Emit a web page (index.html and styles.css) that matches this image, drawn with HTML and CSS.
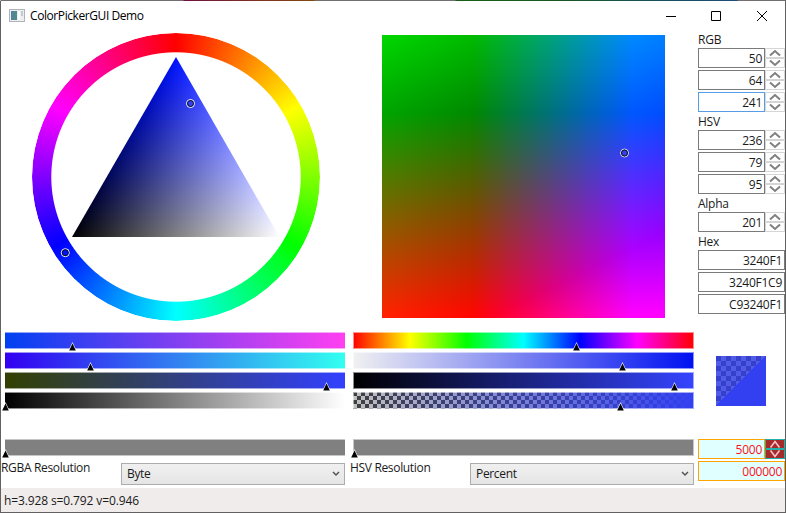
FILE: index.html
```html
<!DOCTYPE html>
<html lang="en">
<head>
<meta charset="utf-8">
<title>ColorPickerGUI Demo</title>
<link rel="stylesheet" href="styles.css">
</head>
<body>
<div class="window">
  <header class="titlebar">
    <svg class="app-icon" width="16" height="14" viewBox="0 0 16 14">
      <rect x=".5" y=".5" width="15" height="12" fill="#eceef1" stroke="#b0b3b7"/>
      <rect x="2" y="2" width="6" height="9" fill="#4d8f88"/>
      <rect x="2" y="2" width="3" height="9" fill="#5484a0"/>
      <rect x="9" y="2" width="2" height="9" fill="#fff"/>
      <rect x="12" y="2" width="2" height="5" fill="#c0cdd0"/>
    </svg>
    <h1 class="title">ColorPickerGUI Demo</h1>
    <svg class="caption" width="102" height="12" viewBox="0 0 102 12">
      <path d="M0 6.500h10M45.500 1.500h9v9h-9zM91 1l10 10M101 1L91 11" fill="none" stroke="#000"/>
    </svg>
  </header>

  <main class="content">
    <section class="column">
      <div class="stage">
        <div class="wheel">
          <div class="ring"></div>
          <svg class="overlay" width="288" height="288" viewBox="0 0 288 288">
            <defs>
              <linearGradient id="hue" gradientUnits="userSpaceOnUse" x1="0" y1="24" x2="0" y2="204">
                <stop offset="0" stop-color="#0012ff"/><stop offset="1" stop-color="#000"/>
              </linearGradient>
              <linearGradient id="white" gradientUnits="userSpaceOnUse" x1="92" y1="114" x2="247.500" y2="204">
                <stop offset="0" stop-color="#000"/><stop offset="1" stop-color="#fff"/>
              </linearGradient>
              <clipPath id="tri"><path d="M144 24L247.500 204H40z"/></clipPath>
            </defs>
            <g clip-path="url(#tri)" class="isolate">
              <rect x="40" y="24" width="208" height="180" fill="url(#hue)"/>
              <rect class="add" x="40" y="24" width="208" height="180" fill="url(#white)"/>
            </g>
            <g fill="none">
              <g transform="translate(158.500 70.500)"><circle r="4" stroke="#fff"/><circle r="3" stroke="#111"/></g>
              <g transform="translate(33.300 219.700)"><circle r="4" stroke="#fff"/><circle r="3" stroke="#111"/></g>
            </g>
          </svg>
        </div>
      </div>
      <div class="sliders">
        <div class="slider red"><svg class="thumb" style="left:67px"><use href="#thumb"/></svg></div>
        <div class="slider green"><svg class="thumb" style="left:85px"><use href="#thumb"/></svg></div>
        <div class="slider blue"><svg class="thumb" style="left:321px"><use href="#thumb"/></svg></div>
        <div class="slider gray"><svg class="thumb" style="left:0px"><use href="#thumb"/></svg></div>
      </div>
      <div class="slider plain"><svg class="thumb" style="left:0px"><use href="#thumb"/></svg></div>
      <div class="resolution">
        <span class="label">RGBA Resolution</span>
        <div class="combo"><span>Byte</span><svg width="8" height="6" viewBox="0 0 8 6"><path d="M1 1l3 3 3-3" fill="none" stroke="#555" stroke-width="1.500"/></svg></div>
      </div>
    </section>

    <section class="column second">
      <div class="stage">
        <svg class="plane" width="283" height="283" viewBox="0 0 283 283">
          <defs>
            <linearGradient id="pr" x1="0" y1=".276" x2="0" y2=".989"><stop offset="0" stop-color="#000"/><stop offset="1" stop-color="#f00"/></linearGradient>
            <linearGradient id="pg" x1="0" y1="0" x2=".462" y2=".958"><stop offset="0" stop-color="#00d700"/><stop offset="1" stop-color="#000"/></linearGradient>
            <linearGradient id="pb" x1=".323" y1="0" x2=".887" y2="0"><stop offset="0" stop-color="#000"/><stop offset="1" stop-color="#00f"/></linearGradient>
          </defs>
          <g class="isolate">
            <rect width="283" height="283" fill="url(#pr)"/>
            <rect class="add" width="283" height="283" fill="url(#pg)"/>
            <rect class="add" width="283" height="283" fill="url(#pb)"/>
          </g>
          <g transform="translate(242.500 118)" fill="none"><circle r="4" stroke="#ddd"/><circle r="3" stroke="#111"/></g>
        </svg>
      </div>
      <div class="sliders">
        <div class="slider hue"><svg class="thumb" style="left:223px"><use href="#thumb"/></svg></div>
        <div class="slider sat"><svg class="thumb" style="left:269px"><use href="#thumb"/></svg></div>
        <div class="slider val"><svg class="thumb" style="left:321px"><use href="#thumb"/></svg></div>
        <div class="slider alpha"><svg class="thumb" style="left:267px"><use href="#thumb"/></svg></div>
      </div>
      <div class="slider plain"><svg class="thumb" style="left:1px"><use href="#thumb"/></svg></div>
      <div class="resolution">
        <span class="label">HSV Resolution</span>
        <div class="combo"><span>Percent</span><svg width="8" height="6" viewBox="0 0 8 6"><path d="M1 1l3 3 3-3" fill="none" stroke="#555" stroke-width="1.500"/></svg></div>
      </div>
    </section>

    <aside class="values">
      <div class="group">
        <span class="label">RGB</span>
        <div class="row"><span class="field">50</span><svg class="spin"><use href="#spin"/></svg></div>
        <div class="row"><span class="field">64</span><svg class="spin"><use href="#spin"/></svg></div>
        <div class="row"><span class="field focus">241</span><svg class="spin"><use href="#spin"/></svg></div>
      </div>
      <div class="group">
        <span class="label">HSV</span>
        <div class="row"><span class="field">236</span><svg class="spin"><use href="#spin"/></svg></div>
        <div class="row"><span class="field">79</span><svg class="spin"><use href="#spin"/></svg></div>
        <div class="row"><span class="field">95</span><svg class="spin"><use href="#spin"/></svg></div>
      </div>
      <div class="group">
        <span class="label">Alpha</span>
        <div class="row"><span class="field">201</span><svg class="spin"><use href="#spin"/></svg></div>
      </div>
      <div class="group">
        <span class="label">Hex</span>
        <div class="row"><span class="field">3240F1</span></div>
        <div class="row"><span class="field">3240F1C9</span></div>
        <div class="row"><span class="field">C93240F1</span></div>
      </div>
      <div class="swatch"></div>
      <div class="group styled">
        <div class="row"><span class="field">5000</span>
          <svg class="spin" viewBox="0 0 20 20"><rect width="20" height="20" fill="#a52a2a"/><path d="M.5.500h19v9H.5zM.5 10.500h19v9H.5z" fill="none" stroke="#20b2aa"/><path d="M5.500 8.500l4.500-6 4.500 6M5.500 11.500l4.500 6 4.500-6" fill="none" stroke="#ffc0cb" stroke-width="1.600"/></svg>
        </div>
        <div class="row"><span class="field">000000</span></div>
      </div>
    </aside>
  </main>

  <footer class="status">h=3.928 s=0.792 v=0.946</footer>
</div>

<svg class="symbols" width="0" height="0">
  <symbol id="thumb" viewBox="0 0 9 10"><path d="M4.500 0L9 9.500H0z" fill="#fff" fill-opacity=".85"/><path d="M4.500 1.500L7.800 8.500H1.200z" fill="#000"/></symbol>
  <symbol id="spin" viewBox="0 0 20 20"><rect width="20" height="20" fill="#fff"/><path d="M.5.500h19v9H.5zM.5 10.500h19v9H.5z" fill="none" stroke="#d5d5d5"/><path d="M5 7.500l5-4.500 5 4.500M5 12.500l5 4.500 5-4.500" fill="none" stroke="#808080" stroke-width="2"/></symbol>
</svg>
</body>
</html>
```
FILE: styles.css
```css
* { box-sizing: border-box; }
body { margin: 0; overflow: hidden; }
.window {
  width: 786px; height: 513px;
  display: flex; flex-direction: column;
  background:
    linear-gradient(90deg, #706e6e 183px, #701040 184px, #803020 260px, #804a10 314px, #706e6e 315px 455px,
      #186018 456px, #185820 560px, #185060 660px, #1c4c78 737px, #706e6e 738px) 0 0 / 100% 1px no-repeat border-box,
    #fff;
  border: 1px solid #626060;
  border-top-color: transparent;
  font: 12px/16px "Open Sans", "Noto Sans", sans-serif;
  letter-spacing: -.25px;
  color: #1a1a1a;
}
.symbols { position: absolute; }
.titlebar { height: 30px; display: flex; align-items: center; padding: 0 17px 0 8px; flex: none; }
.title { margin: 0 auto 0 5px; font-size: 12px; font-weight: 400; letter-spacing: -.42px; color: #000; }
.content { flex: 1; display: grid; grid-template-columns: 348px 349px 1fr; }
.column { display: flex; flex-direction: column; }
.stage { height: 301px; display: flex; flex: none; }
.wheel { position: relative; width: 288px; height: 288px; margin: 2px 0 0 31px; }
.ring {
  width: 288px; height: 288px; border-radius: 50%;
  background: conic-gradient(#f00, #ff0, #0f0, #0ff, #00f, #f0f, #f00);
  mask: radial-gradient(circle, transparent 124.200px, #000 125.200px);
}
.overlay { position: absolute; inset: 0; }
.isolate { isolation: isolate; }
.add { mix-blend-mode: plus-lighter; }
.plane { margin: 4px 0 0 33px; }
.sliders { display: grid; row-gap: 3px; margin-bottom: 30px; }
.slider { position: relative; width: 340px; height: 17px; margin-left: 4px; flex: none; }
.slider::before {
  content: ""; position: absolute; inset: 0;
  border: solid rgba(255,255,255,.55); border-width: 1px 0;
}
.second .slider { width: 341px; }
.second .slider::before { border-width: 1px; }
.thumb { position: absolute; left: 0; top: 10px; width: 9px; height: 10px; margin-left: -4px; }
.red { background: linear-gradient(90deg, #0040f1, #ff40f1); }
.green { background: linear-gradient(90deg, #3200f1, #32fff1); }
.blue { background: linear-gradient(90deg, #324000, #3240ff); }
.gray { background: linear-gradient(90deg, #000, #fff); }
.hue { background: linear-gradient(90deg, #f00, #ff0, #0f0, #0ff, #00f, #f0f, #f00); }
.sat { background: linear-gradient(90deg, #f1f1f1, #0011f1); }
.val { background: linear-gradient(90deg, #000, #3544ff); }
.alpha {
  background: linear-gradient(90deg, rgba(50,64,241,0), #3240f1),
    repeating-conic-gradient(#c0c0c0 0 25%, #404040 0 50%) 0 0 / 8px 8px;
}
.plain { background: #808080; }
.resolution { display: grid; grid-template-columns: 120px 224px; margin-top: 4px; letter-spacing: -.33px; }
.second .resolution { margin-left: 1px; }
.combo {
  height: 22px; margin-top: 3px; padding: 0 4px 0 5px;
  display: flex; align-items: center; justify-content: space-between;
  border: 1px solid #acacac;
  background: linear-gradient(#f0f0f0, #e5e5e5);
}
.values { display: flex; flex-direction: column; margin-top: -1px; }
.group { display: grid; row-gap: 2px; }
.label { height: 16px; }
.values .label { padding-top: 2px; }
.row { display: flex; height: 20px; }
.field { flex: 1; border: 1px solid #7a7a7a; padding: 2px 2px 0; text-align: right; }
.focus { border-color: #569de5; }
.spin { width: 20px; height: 20px; flex: none; }
.swatch {
  width: 50px; height: 50px; margin: 42px 0 33px 18px;
  background: linear-gradient(135deg, transparent 50%, #3240f1 50%),
    linear-gradient(rgba(50,64,241,.788), rgba(50,64,241,.788)),
    repeating-conic-gradient(#c0c0c0 0 25%, #404040 0 50%) 0 0 / 10px 10px;
}
.styled .field { background: #e0ffff; border-color: #ffa500; color: #ff1020; }
.status { height: 24px; flex: none; padding: 5px 3px; background: #f0eceb; letter-spacing: -.12px; }
```
